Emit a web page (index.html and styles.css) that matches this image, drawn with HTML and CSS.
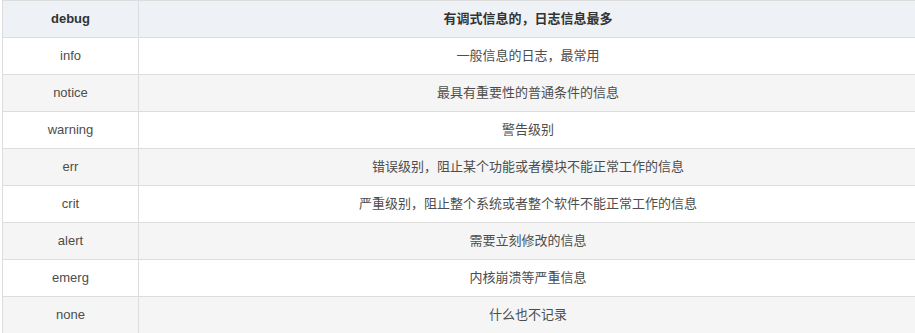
FILE: index.html
```html
<!DOCTYPE html>
<html lang="zh-CN">
<head>
<meta charset="utf-8">
<title>日志级别</title>
<link rel="stylesheet" href="styles.css">
</head>
<body>
<div class="frame">
  <table class="levels">
    <thead>
      <tr><th class="name">debug</th><th class="desc">有调式信息的，日志信息最多</th></tr>
    </thead>
    <tbody>
      <tr><td>info</td><td>一般信息的日志，最常用</td></tr>
      <tr><td>notice</td><td>最具有重要性的普通条件的信息</td></tr>
      <tr><td>warning</td><td>警告级别</td></tr>
      <tr><td>err</td><td>错误级别，阻止某个功能或者模块不能正常工作的信息</td></tr>
      <tr><td>crit</td><td>严重级别，阻止整个系统或者整个软件不能正常工作的信息</td></tr>
      <tr><td>alert</td><td>需要立刻修改的信息</td></tr>
      <tr><td>emerg</td><td>内核崩溃等严重信息</td></tr>
      <tr><td>none</td><td>什么也不记录</td></tr>
    </tbody>
  </table>
</div>
</body>
</html>
```
FILE: styles.css
```css
html, body {
  margin: 0;
  padding: 0;
  background: #ffffff;
}

.frame {
  width: 100%;
  height: 333px;
  overflow: hidden;
  padding-left: 2px;
  box-sizing: border-box;
}

.levels {
  border-collapse: collapse;
  width: 916px;
  table-layout: fixed;
  font-family: "Liberation Sans", "Noto Sans CJK SC", Arial, sans-serif;
  font-size: 13px;
  color: #4d4d4d;
}

.levels th,
.levels td {
  border: 1px solid #dddddd;
  height: 36px;
  padding: 0;
  text-align: center;
  vertical-align: middle;
  line-height: 18px;
}

.levels th.name {
  width: 135px;
}

.levels thead th {
  background: #eef1f5;
  color: #333333;
  font-weight: bold;
}

.levels tbody tr:nth-child(even) td {
  background: #f5f5f5;
}

.levels tbody tr:nth-child(odd) td {
  background: #ffffff;
}
```
